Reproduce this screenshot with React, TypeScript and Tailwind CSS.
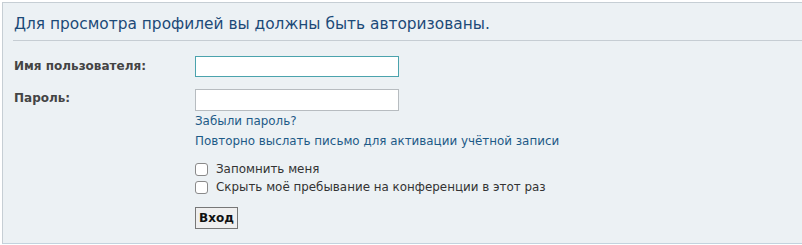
import React from "react";

export default function App() {
  const font = { fontFamily: '"DejaVu Sans", Verdana, sans-serif' };
  return (
    <div className="w-[802px] h-[245px] bg-white pt-[2px] pl-[2px] overflow-hidden" style={font}>
      <div className="h-[242px] bg-[#ecf1f4] border-l border-t border-b border-l-[#c6ced4] border-t-[#c6ced4] border-b-[#c3d3de]">
        <div className="ml-[10px] h-[38px] border-b border-[#c6cdd3] flex items-end pb-[7px]">
          <h2 className="pl-[1px] text-[15.4px] leading-[18px] text-[#1c4a78] font-normal">
            Для просмотра профилей вы должны быть авторизованы.
          </h2>
        </div>
        <div className="ml-[11px] pt-[15px] text-[12px] leading-[15px]">
          <div className="flex">
            <div className="w-[181px] pt-[3px] font-bold text-[#444]">Имя пользователя:</div>
            <input
              autoFocus
              className="w-[204px] h-[21px] bg-white border border-[#4ba3ad] outline-none px-[2px] text-[12px]"
            />
          </div>
          <div className="flex mt-[12px]">
            <div className="w-[181px] pt-[2px] font-bold text-[#444]">Пароль:</div>
            <div className="flex flex-col text-[11.9px]">
              <input
                type="password"
                className="w-[204px] h-[22px] bg-white border border-[#b7bcc0] outline-none px-[2px]"
              />
              <a className="mt-[3px] text-[#1d5a87]">Забыли пароль?</a>
              <a className="mt-[5px] text-[#1d5a87]">Повторно выслать письмо для активации учётной записи</a>
              <label className="mt-[13px] flex items-center text-[#333]">
                <span className="w-[13px] h-[13px] border border-[#8a8a8a] rounded-[3px] bg-white mr-[8px]" />
                Запомнить меня
              </label>
              <label className="mt-[3px] flex items-center text-[#333]">
                <span className="w-[13px] h-[13px] border border-[#8a8a8a] rounded-[3px] bg-white mr-[8px]" />
                Скрыть моё пребывание на конференции в этот раз
              </label>
              <div className="mt-[12px]">
                <button className="h-[22px] px-[3px] border border-[#777] bg-[#efefef] font-bold text-[12px] text-[#111]">
                  Вход
                </button>
              </div>
            </div>
          </div>
        </div>
      </div>
    </div>
  );
}
